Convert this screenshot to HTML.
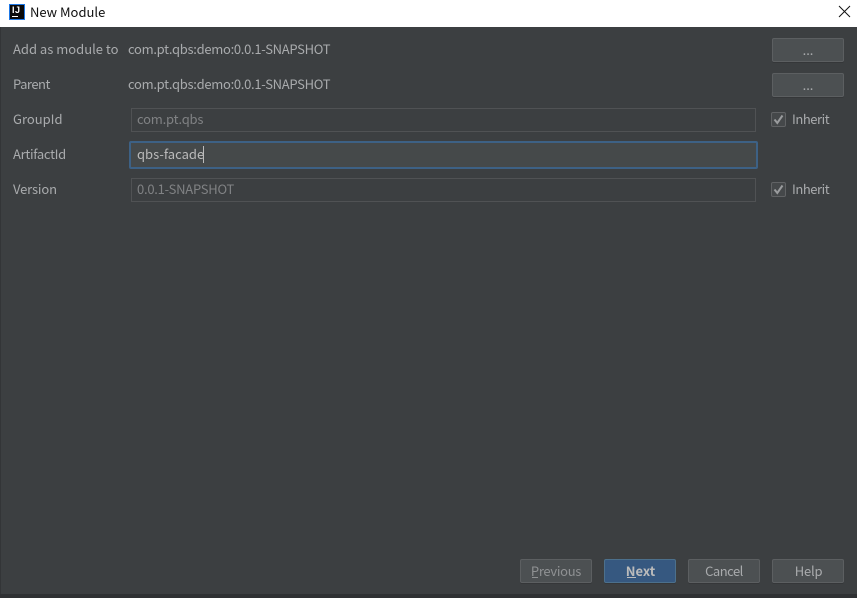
<!DOCTYPE html>
<html>
<head>
<meta charset="utf-8">
<style>
html,body{margin:0;padding:0;width:857px;height:598px;overflow:hidden;background:#3c3f41;font-family:"Noto Sans CJK SC","Liberation Sans",sans-serif;}
div{position:absolute;box-sizing:border-box;white-space:nowrap;}
.lb{font-size:13px;line-height:18px;color:#a9abad;left:13px;}
.val{font-size:13px;line-height:18px;color:#a9abad;left:128px;letter-spacing:-0.3px;}
.inp{left:131px;width:625px;height:24px;border:1px solid #505254;background:#3c3f41;color:#808284;font-size:13px;line-height:20px;padding-left:5px;}
.btn{height:24px;width:72px;border:1px solid #5c5f61;border-radius:2px;background:#4c5052;color:#a9abad;font-size:13px;line-height:22px;text-align:center;box-shadow:0 1px 0 #353739;}
.cb{left:771px;width:15px;height:15px;border:1px solid #616365;border-radius:2px;background:#45484a;}
.inh{left:792px;font-size:13px;line-height:18px;color:#a9abad;letter-spacing:-0.45px;}
.ul{height:1px;}
</style>
</head>
<body>
<div style="left:0;top:0;width:857px;height:27px;background:#fff;"></div>
<div style="left:9px;top:4px;width:16px;height:16px;background:#0a0a0a;border:1px solid #1e78e6;"></div>
<div style="left:12px;top:5px;font:bold 9px/10px 'Liberation Sans',sans-serif;color:#fff;letter-spacing:0.5px;">IJ</div>
<div style="left:12px;top:16px;width:6px;height:1px;background:#fff;"></div>
<div style="left:30px;top:3px;font-size:13px;line-height:18px;color:#111;">New Module</div>
<svg style="position:absolute;left:838px;top:5px" width="13" height="13" viewBox="0 0 13 13"><path d="M1 1L12 12M12 1L1 12" stroke="#111" stroke-width="1" fill="none"/></svg>

<div class="lb" style="top:40px;">Add as module to</div>
<div class="val" style="top:40px;">com.pt.qbs:demo:0.0.1-SNAPSHOT</div>
<div class="btn" style="left:772px;top:38px;">...</div>

<div class="lb" style="top:75px;letter-spacing:-0.5px;">Parent</div>
<div class="val" style="top:75px;">com.pt.qbs:demo:0.0.1-SNAPSHOT</div>
<div class="btn" style="left:772px;top:73px;">...</div>

<div class="lb" style="top:110px;">GroupId</div>
<div class="inp" style="top:108px;letter-spacing:-0.2px;">com.pt.qbs</div>
<div class="cb" style="top:112px;"></div>
<svg style="position:absolute;left:771px;top:112px" width="15" height="15" viewBox="0 0 15 15"><path d="M3.5 7.5L6.3 11L11.5 3.5" stroke="#9a9c9e" stroke-width="2" fill="none"/></svg>
<div class="inh" style="top:110px;">Inherit</div>

<div class="lb" style="top:145px;letter-spacing:-0.3px;">ArtifactId</div>
<div style="left:129px;top:141px;width:629px;height:28px;border:2px solid #3d6185;border-radius:2px;background:#45494a;"></div>
<div style="left:137px;top:145px;font-size:13px;line-height:18px;color:#bbbbbb;">qbs-facade</div>
<div style="left:203px;top:146px;width:1px;height:17px;background:#bbb;"></div>

<div class="lb" style="top:180px;letter-spacing:-0.15px;">Version</div>
<div class="inp" style="top:178px;letter-spacing:-0.25px;">0.0.1-SNAPSHOT</div>
<div class="cb" style="top:182px;"></div>
<svg style="position:absolute;left:771px;top:182px" width="15" height="15" viewBox="0 0 15 15"><path d="M3.5 7.5L6.3 11L11.5 3.5" stroke="#9a9c9e" stroke-width="2" fill="none"/></svg>
<div class="inh" style="top:180px;">Inherit</div>

<div class="btn" style="left:520px;top:559px;color:#8f9193;letter-spacing:-0.3px;">Previous</div>
<div class="ul" style="left:532px;top:577px;width:6px;background:#8f9193;"></div>
<div class="btn" style="left:604px;top:559px;background:#365880;border-color:#4c708c;color:#bbbbbb;font-weight:bold;padding-left:1px;">Next</div>
<div class="ul" style="left:627px;top:577px;width:9px;background:#bbbbbb;"></div>
<div class="btn" style="left:688px;top:559px;letter-spacing:-0.5px;">Cancel</div>
<div class="btn" style="left:772px;top:559px;padding-left:1px;letter-spacing:-0.2px;">Help</div>

<div style="left:0;top:27px;width:1px;height:571px;background:#333537;"></div>
<div style="left:0;top:594px;width:857px;height:4px;background:#2f3133;"></div>
</body>
</html>
